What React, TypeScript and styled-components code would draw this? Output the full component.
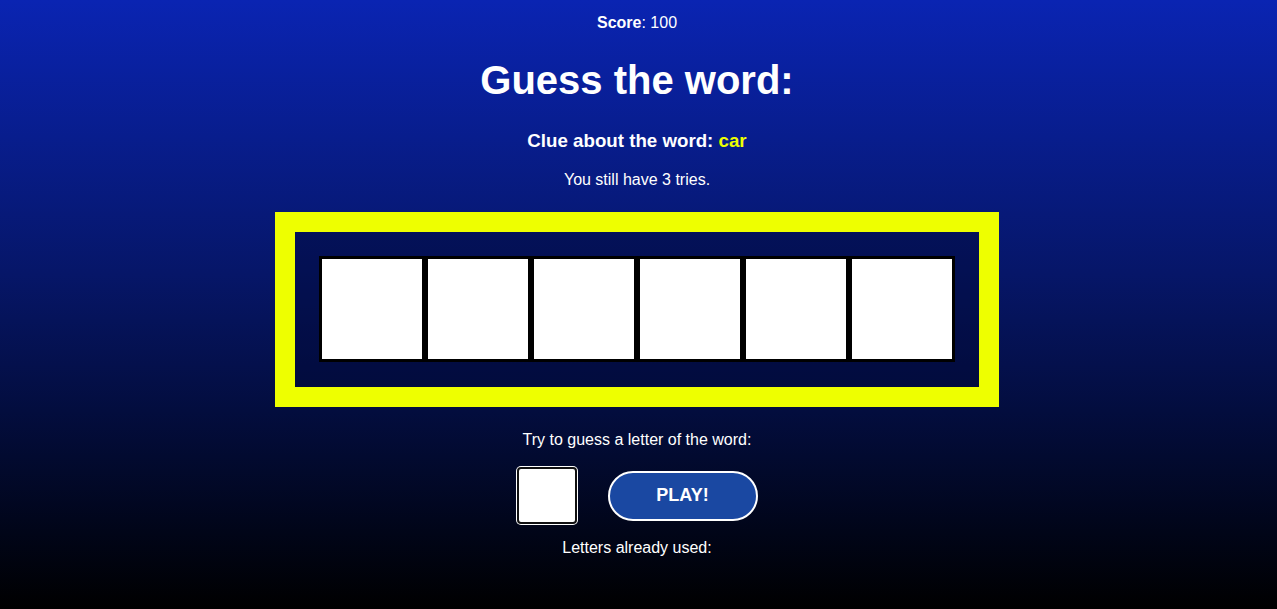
import React from 'react';
import styled, { createGlobalStyle } from 'styled-components';

const GlobalStyle = createGlobalStyle`
  html, body {
    margin: 0;
    padding: 0;
  }
  body {
    font-family: 'Liberation Sans', Arial, sans-serif;
    background: #000;
  }
`;

const Page = styled.div`
  min-height: 100vh;
  box-sizing: border-box;
  padding: 14px 3px 0 0;
  background: linear-gradient(to bottom, #0a24b2 0%, #061668 45%, #020a30 75%, #000 100%);
  color: white;
  display: flex;
  flex-direction: column;
  align-items: center;
  text-align: center;
`;

const Score = styled.p`
  margin: 0;
  font-size: 16px;
  line-height: 18px;

  strong {
    font-weight: 700;
  }
`;

const Title = styled.h1`
  margin: 25px 0 0;
  font-size: 40px;
  line-height: 46px;
  font-weight: 700;
`;

const Clue = styled.h3`
  margin: 27px 0 0;
  font-size: 18.72px;
  line-height: 22px;
  font-weight: 700;
`;

const ClueWord = styled.span`
  color: #eeff00;
`;

const Text = styled.p<{ $top: number }>`
  margin: ${(p) => p.$top}px 0 0;
  font-size: 16px;
  line-height: 18px;
`;

const Board = styled.div`
  margin-top: 23px;
  border: 20px solid #eeff00;
  padding: 24px 24px 25px;
  background: rgba(0, 8, 50, 0.4);
  display: flex;
`;

const LetterBox = styled.div`
  width: 100px;
  height: 100px;
  border: 3px solid #000;
  background: #fff;
  color: #000;
  font-size: 60px;
  font-weight: 700;
  display: flex;
  align-items: center;
  justify-content: center;
`;

const GuessRow = styled.form`
  margin-top: 18px;
  display: flex;
  align-items: center;
  gap: 31px;
`;

const LetterInput = styled.input`
  box-sizing: border-box;
  width: 60px;
  height: 57px;
  border: 2px solid #111;
  border-radius: 4px;
  box-shadow: 0 0 0 1px #fff;
  outline: none;
  background: #fff;
  color: #000;
  font-family: 'Liberation Sans', Arial, sans-serif;
  font-size: 36px;
  text-align: center;
  padding: 0;
  caret-color: #000;
`;

const PlayButton = styled.button`
  box-sizing: border-box;
  width: 150px;
  height: 50px;
  border: 2px solid #fff;
  border-radius: 25px;
  background: #1a48a2;
  color: #fff;
  font-family: 'Liberation Sans', Arial, sans-serif;
  font-size: 18px;
  font-weight: 700;
  cursor: pointer;
`;

export default function App() {
  const word = 'toyota';
  const slots = word.split('').map(() => '');

  return (
    <Page>
      <GlobalStyle />
      <Score>
        <strong>Score</strong>: 100
      </Score>
      <Title>Guess the word:</Title>
      <Clue>
        Clue about the word: <ClueWord>car</ClueWord>
      </Clue>
      <Text $top={19}>You still have 3 tries.</Text>
      <Board>
        {slots.map((s, i) => (
          <LetterBox key={i}>{s}</LetterBox>
        ))}
      </Board>
      <Text $top={24}>Try to guess a letter of the word:</Text>
      <GuessRow onSubmit={(e) => e.preventDefault()}>
        <LetterInput maxLength={1} autoFocus />
        <PlayButton type="submit">PLAY!</PlayButton>
      </GuessRow>
      <Text $top={15}>Letters already used:</Text>
    </Page>
  );
}
